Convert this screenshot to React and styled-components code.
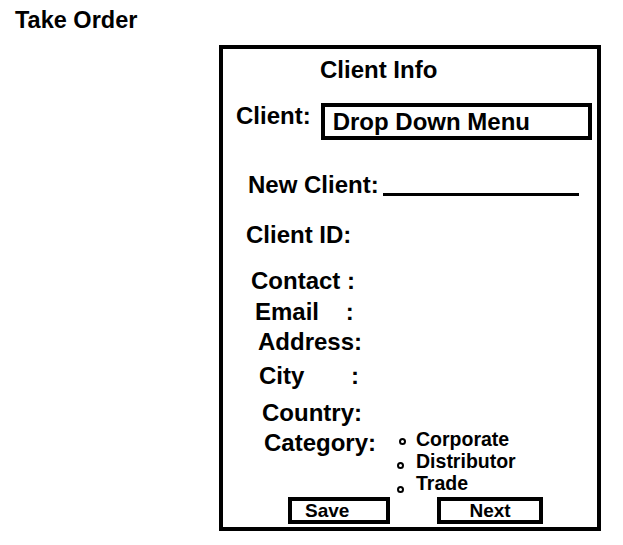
import React from 'react';
import styled, { createGlobalStyle } from 'styled-components';

const GlobalStyle = createGlobalStyle`
  html, body {
    margin: 0;
    padding: 0;
    background: #fff;
  }
  body {
    font-family: "Liberation Sans", Arial, sans-serif;
    color: #000;
  }
`;

const Page = styled.div`
  width: 623px;
  height: 545px;
  padding: 9px 0 0 15px;
  box-sizing: border-box;
`;

const PageTitle = styled.h1`
  margin: 0;
  font-size: 23.5px;
  line-height: 23px;
  font-weight: 700;
`;

const Frame = styled.section`
  margin: 13px 0 0 204px;
  width: 382px;
  height: 486px;
  box-sizing: border-box;
  border: 4px solid #000;
  display: flex;
  flex-direction: column;
  padding-top: 9px;
`;

const Row = styled.div`
  display: flex;
  align-items: flex-start;
  margin-top: ${(p) => p.$mt || 0}px;
  padding-left: ${(p) => p.$indent || 0}px;
`;

const Label = styled.span`
  font-size: 24px;
  line-height: 24px;
  font-weight: 700;
  white-space: pre;
  margin-top: ${(p) => p.$mt || 0}px;
`;

const DropDown = styled.div`
  margin-left: 10px;
  width: 271px;
  height: 37px;
  box-sizing: border-box;
  border: 4px solid #000;
  display: flex;
  align-items: center;
  padding-left: 8px;
  font-size: 24px;
  line-height: 24px;
  font-weight: 700;
`;

const Blank = styled.div`
  margin: 20px 0 0 4px;
  width: 196px;
  height: 3px;
  background: #000;
`;

const Options = styled.div`
  display: flex;
  flex-direction: column;
  margin: 2px 0 0 21px;
`;

const Option = styled.label`
  display: flex;
  align-items: flex-start;
  height: 22px;
`;

const Dot = styled.span`
  width: 7px;
  height: 7px;
  box-sizing: border-box;
  border: 2px solid #000;
  border-radius: 50%;
  margin-top: ${(p) => p.$dy}px;
  margin-left: ${(p) => p.$dx}px;
  margin-right: ${(p) => 12 - p.$dx}px;
`;

const OptionText = styled.span`
  font-size: 19.5px;
  line-height: 22px;
  font-weight: 700;
`;

const Button = styled.button`
  width: ${(p) => p.$w}px;
  height: 27px;
  margin-left: ${(p) => p.$ml || 0}px;
  box-sizing: border-box;
  border: 4px solid #000;
  background: #fff;
  padding: 0 0 0 ${(p) => (p.$left ? 13 : 0)}px;
  display: flex;
  align-items: center;
  justify-content: ${(p) => (p.$left ? 'flex-start' : 'center')};
  font-family: "Liberation Sans", Arial, sans-serif;
  font-size: 19px;
  line-height: 19px;
  font-weight: 700;
  color: #000;
`;

const fields = [
  { text: 'Client ID:', indent: 23, mt: 26 },
  { text: 'Contact :', indent: 28, mt: 22 },
  { text: 'Email    :', indent: 32, mt: 7 },
  { text: 'Address:', indent: 35, mt: 6 },
  { text: 'City       :', indent: 36, mt: 10 },
  { text: 'Country:', indent: 39, mt: 13 },
];

const categories = [
  { name: 'Corporate', dy: 10, dx: 2 },
  { name: 'Distributor', dy: 12, dx: 0 },
  { name: 'Trade', dy: 14, dx: 0 },
];

export default function App() {
  return (
    <Page>
      <GlobalStyle />
      <PageTitle>Take Order</PageTitle>
      <Frame>
        <Row $indent={97}>
          <Label>Client Info</Label>
        </Row>
        <Row $indent={13} $mt={21}>
          <Label $mt={1}>Client:</Label>
          <DropDown>Drop Down Menu</DropDown>
        </Row>
        <Row $indent={25} $mt={33}>
          <Label>New Client:</Label>
          <Blank />
        </Row>
        {fields.map((f) => (
          <Row key={f.text} $indent={f.indent} $mt={f.mt}>
            <Label>{f.text}</Label>
          </Row>
        ))}
        <Row $indent={41} $mt={1}>
          <Label $mt={5}>Category:</Label>
          <Options>
            {categories.map((c) => (
              <Option key={c.name}>
                <Dot $dy={c.dy} $dx={c.dx} />
                <OptionText>{c.name}</OptionText>
              </Option>
            ))}
          </Options>
        </Row>
        <Row $indent={65} $mt={3}>
          <Button $w={102} $left>Save</Button>
          <Button $w={106} $ml={47}>Next</Button>
        </Row>
      </Frame>
    </Page>
  );
}
